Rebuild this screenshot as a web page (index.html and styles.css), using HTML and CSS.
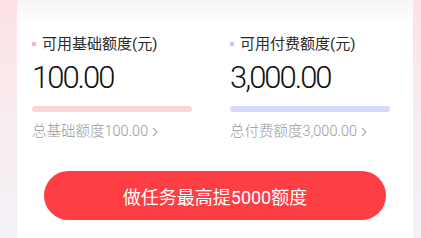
FILE: index.html
```html
<!DOCTYPE html>
<html>
<head>
  <meta charset="utf-8">
  <link rel="stylesheet" href="styles.css">
</head>
<body>
  <div class="page">
    <div class="card">
      <div class="stats">
        <div class="stat">
          <div class="stat-label"><span class="dot dot-base"></span>可用基础额度(元)</div>
          <div class="stat-amount">100.00</div>
          <div class="stat-bar bar-base"></div>
          <div class="stat-total">总基础额度100.00
            <svg class="chevron" width="6" height="10" viewBox="0 0 6 10"><path d="M1 1l4 4-4 4" fill="none" stroke="#aaa" stroke-width="1.1"/></svg>
          </div>
        </div>
        <div class="stat">
          <div class="stat-label"><span class="dot dot-paid"></span>可用付费额度(元)</div>
          <div class="stat-amount">3,000.00</div>
          <div class="stat-bar bar-paid"></div>
          <div class="stat-total">总付费额度3,000.00
            <svg class="chevron" width="6" height="10" viewBox="0 0 6 10"><path d="M1 1l4 4-4 4" fill="none" stroke="#aaa" stroke-width="1.1"/></svg>
          </div>
        </div>
      </div>
      <button type="button" class="task-button">做任务最高提5000额度</button>
    </div>
  </div>
</body>
</html>
```

FILE: styles.css
```css
html, body {
  margin: 0;
  height: 238px;
  overflow: hidden;
}
body {
  font-family: Roboto, "Noto Sans CJK SC", sans-serif;
  background: linear-gradient(to bottom, #fde2e4 0%, #f8ecef 50%, #f3f2f7 100%);
}
.page {
  display: flex;
  padding: 0 8px 0 17px;
  height: 238px;
}
.card {
  flex: 1;
  background: linear-gradient(to bottom, #f6f5f6 0, #fbfafb 12px, #fff 24px);
}
.stats {
  display: grid;
  grid-template-columns: 1fr 1fr;
  padding-top: 34px;
}
.stat {
  padding-left: 15px;
}
.stat-label {
  display: flex;
  align-items: center;
  font-size: 15px;
  line-height: 20px;
  color: #2a2a2a;
}
.dot {
  width: 4px;
  height: 4px;
  margin-right: 6px;
  border-radius: 1px;
}
.dot-base {
  background: #f7b3b8;
}
.dot-paid {
  background: #c3c6f6;
}
.stat-amount {
  margin-top: 6px;
  font-size: 31px;
  font-weight: 300;
  line-height: 36px;
  letter-spacing: -2px;
  color: #111;
}
.stat-bar {
  width: 160px;
  height: 6px;
  margin-top: 10px;
  border-radius: 3px;
}
.bar-base {
  background: #fcd5d9;
}
.bar-paid {
  background: #d7d9fb;
}
.stat-total {
  display: flex;
  align-items: center;
  margin-top: 10px;
  font-size: 14.5px;
  font-weight: 300;
  line-height: 20px;
  color: #999;
}
.chevron {
  margin-left: 4px;
}
.task-button {
  display: block;
  width: 342px;
  height: 49px;
  margin: 29px auto 0;
  border: none;
  border-radius: 25px;
  background: #fe3e45;
  color: #fff;
  font-family: Roboto, "Noto Sans CJK SC", sans-serif;
  font-size: 18px;
  font-weight: 400;
}
```
